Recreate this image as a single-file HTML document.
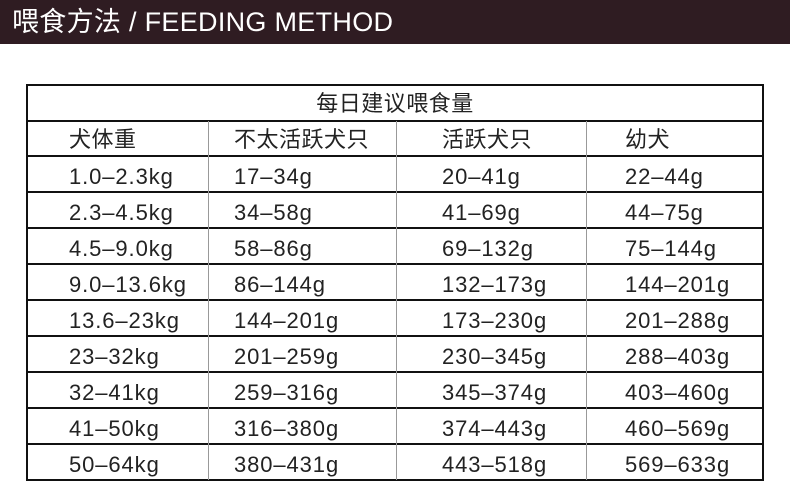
<!DOCTYPE html>
<html><head><meta charset="utf-8"><style>
*{margin:0;padding:0;box-sizing:border-box}
body{width:790px;height:497px;background:#fff;position:relative;overflow:hidden;font-family:"Liberation Sans","Noto Sans CJK SC",sans-serif;color:#222}
.hdr{position:absolute;left:0;top:0;width:790px;height:44px;background:#2f1c22;color:#fff;font-size:27px;line-height:44px;padding-left:12px;letter-spacing:0.3px}
.h{position:absolute;left:26px;width:738px;height:2px;background:#111}
.v{position:absolute;top:121px;height:359px;width:1px;background:#999}
.box{position:absolute;left:26px;top:84px;width:738px;height:397px;border:2px solid #111}
.t{position:absolute;font-size:22px;line-height:36px;white-space:nowrap;letter-spacing:0.9px;margin-top:3px}
.c{font-size:22px;letter-spacing:0.5px}
</style></head><body>
<div class="hdr">喂食方法 / FEEDING METHOD</div>
<div class="box"></div>
<div class="h" style="top:120px"></div>
<div class="h" style="top:155px"></div>
<div class="h" style="top:191px"></div>
<div class="h" style="top:227px"></div>
<div class="h" style="top:263px"></div>
<div class="h" style="top:299px"></div>
<div class="h" style="top:335px"></div>
<div class="h" style="top:371px"></div>
<div class="h" style="top:407px"></div>
<div class="h" style="top:443px"></div>
<div class="v" style="left:208px"></div>
<div class="v" style="left:396px"></div>
<div class="v" style="left:586px"></div>
<div class="t c" style="left:0;width:790px;text-align:center;top:83px">每日建议喂食量</div>
<div class="t c" style="left:69px;top:119px">犬体重</div>
<div class="t c" style="left:234px;top:119px">不太活跃犬只</div>
<div class="t c" style="left:442px;top:119px">活跃犬只</div>
<div class="t c" style="left:625px;top:119px">幼犬</div>

<div class="t" style="left:69px;top:156px">1.0–2.3kg</div><div class="t" style="left:234px;top:156px">17–34g</div><div class="t" style="left:442px;top:156px">20–41g</div><div class="t" style="left:625px;top:156px">22–44g</div>
<div class="t" style="left:69px;top:192px">2.3–4.5kg</div><div class="t" style="left:234px;top:192px">34–58g</div><div class="t" style="left:442px;top:192px">41–69g</div><div class="t" style="left:625px;top:192px">44–75g</div>
<div class="t" style="left:69px;top:228px">4.5–9.0kg</div><div class="t" style="left:234px;top:228px">58–86g</div><div class="t" style="left:442px;top:228px">69–132g</div><div class="t" style="left:625px;top:228px">75–144g</div>
<div class="t" style="left:69px;top:264px">9.0–13.6kg</div><div class="t" style="left:234px;top:264px">86–144g</div><div class="t" style="left:442px;top:264px">132–173g</div><div class="t" style="left:625px;top:264px">144–201g</div>
<div class="t" style="left:69px;top:300px">13.6–23kg</div><div class="t" style="left:234px;top:300px">144–201g</div><div class="t" style="left:442px;top:300px">173–230g</div><div class="t" style="left:625px;top:300px">201–288g</div>
<div class="t" style="left:69px;top:336px">23–32kg</div><div class="t" style="left:234px;top:336px">201–259g</div><div class="t" style="left:442px;top:336px">230–345g</div><div class="t" style="left:625px;top:336px">288–403g</div>
<div class="t" style="left:69px;top:372px">32–41kg</div><div class="t" style="left:234px;top:372px">259–316g</div><div class="t" style="left:442px;top:372px">345–374g</div><div class="t" style="left:625px;top:372px">403–460g</div>
<div class="t" style="left:69px;top:408px">41–50kg</div><div class="t" style="left:234px;top:408px">316–380g</div><div class="t" style="left:442px;top:408px">374–443g</div><div class="t" style="left:625px;top:408px">460–569g</div>
<div class="t" style="left:69px;top:444px">50–64kg</div><div class="t" style="left:234px;top:444px">380–431g</div><div class="t" style="left:442px;top:444px">443–518g</div><div class="t" style="left:625px;top:444px">569–633g</div>
</body></html>
